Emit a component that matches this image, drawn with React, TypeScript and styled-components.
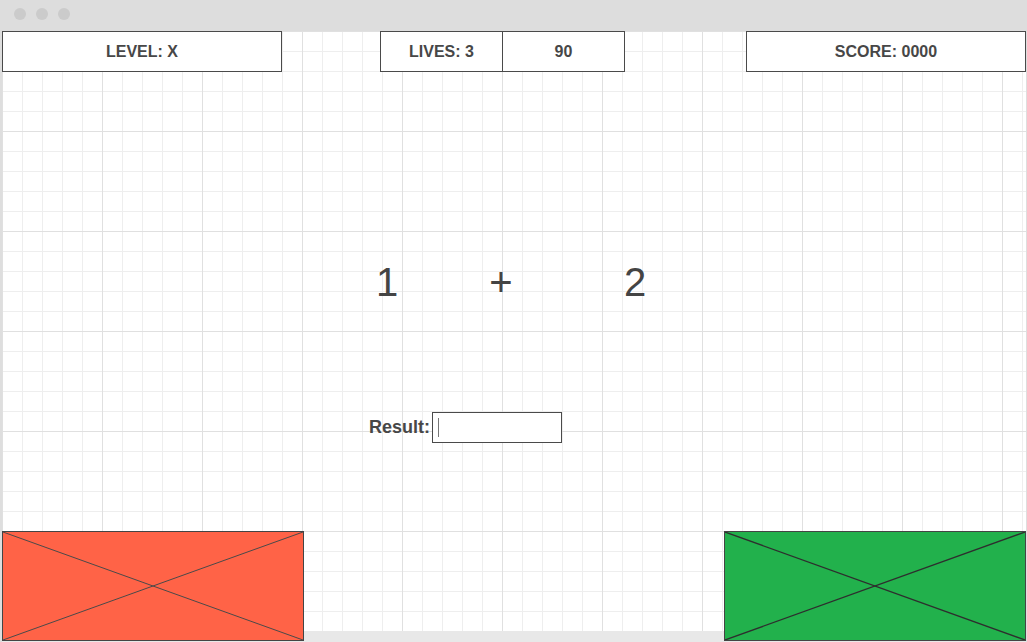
import React from "react";
import styled, { createGlobalStyle } from "styled-components";

const Global = createGlobalStyle`
  html, body { margin: 0; padding: 0; background: #ffffff; overflow: hidden; }
  body { font-family: "Liberation Sans", Arial, sans-serif; color: #444444; }
  * { box-sizing: border-box; }
`;

const Window = styled.div`
  width: 1027px;
  height: 642px;
  display: flex;
  flex-direction: column;
`;

const TitleBar = styled.div`
  height: 31px;
  flex: none;
  background: #dddddd;
  display: flex;
  align-items: flex-start;
  gap: 10px;
  padding: 8px 0 0 14px;
`;

const Dot = styled.span`
  width: 12px;
  height: 12px;
  border-radius: 50%;
  background: #cbcbcb;
`;

const Canvas = styled.div`
  flex: 1;
  display: flex;
  flex-direction: column;
  border-left: 2px solid #dedede;
  border-right: 1px solid #dedede;
  padding-bottom: 1px;
  background:
    linear-gradient(#e8e8e8, #e8e8e8) left bottom / 100% 11px no-repeat,
    linear-gradient(to right, #e0e0e0 1px, transparent 1px) 0 0 / 100px 100px,
    linear-gradient(to bottom, #e0e0e0 1px, transparent 1px) 0 0 / 100px 100px,
    linear-gradient(to right, #eeeeee 1px, transparent 1px) 0 0 / 20px 20px,
    linear-gradient(to bottom, #eeeeee 1px, transparent 1px) 0 0 / 20px 20px,
    #ffffff;
`;

const TopRow = styled.div`
  display: flex;
  height: 41px;
  flex: none;
`;

const StatGroup = styled.div<{ $ml?: string }>`
  display: flex;
  margin-left: ${(p) => p.$ml ?? "0"};
`;

const StatBox = styled.div<{ $w: number; $joined?: boolean }>`
  width: ${(p) => p.$w}px;
  height: 41px;
  border: 1px solid #4a4a4a;
  ${(p) => (p.$joined ? "margin-left: -1px;" : "")}
  background: #ffffff;
  display: flex;
  align-items: center;
  justify-content: center;
  font-weight: 700;
  font-size: 16px;
  color: #474747;
`;

const Equation = styled.div`
  display: flex;
  height: 40px;
  margin-top: 190px;
  padding-left: 365px;
  flex: none;
`;

const Term = styled.span<{ $gap?: number }>`
  width: 40px;
  margin-left: ${(p) => p.$gap ?? 0}px;
  text-align: center;
  font-size: 40px;
  line-height: 40px;
  color: #444444;
`;

const ResultRow = styled.div`
  display: flex;
  align-items: center;
  height: 31px;
  margin-top: 110px;
  padding-left: 367px;
  gap: 2px;
  flex: none;
`;

const ResultLabel = styled.label`
  font-weight: 700;
  font-size: 18px;
  line-height: 20px;
  margin-top: -2px;
  color: #474747;
`;

const ResultInput = styled.div`
  width: 130px;
  height: 31px;
  border: 1px solid #4a4a4a;
  background: #ffffff;
  display: flex;
  align-items: center;
  padding-left: 5px;
`;

const Caret = styled.span`
  width: 1px;
  height: 19px;
  background: #777777;
`;

const BottomRow = styled.div`
  display: flex;
  justify-content: space-between;
  margin-top: 88px;
  flex: none;
`;

const Placeholder = styled.div<{ $color: string }>`
  width: 302px;
  height: 110px;
  border: 1px solid #444444;
  background: ${(p) => p.$color};
`;

const Cross = styled.svg`
  display: block;
  width: 100%;
  height: 100%;
`;

function XBox({ color, stroke, width }: { color: string; stroke: string; width: number }) {
  return (
    <Placeholder $color={color}>
      <Cross viewBox="0 0 300 108" preserveAspectRatio="none">
        <line x1="0" y1="0" x2="300" y2="108" stroke={stroke} strokeWidth={width} vectorEffect="non-scaling-stroke" />
        <line x1="300" y1="0" x2="0" y2="108" stroke={stroke} strokeWidth={width} vectorEffect="non-scaling-stroke" />
      </Cross>
    </Placeholder>
  );
}

export default function App() {
  return (
    <>
      <Global />
      <Window>
        <TitleBar>
          <Dot />
          <Dot />
          <Dot />
        </TitleBar>
        <Canvas>
          <TopRow>
            <StatBox $w={280}>LEVEL: X</StatBox>
            <StatGroup $ml="98px">
              <StatBox $w={123}>LIVES: 3</StatBox>
              <StatBox $w={123} $joined>90</StatBox>
            </StatGroup>
            <StatGroup $ml="auto">
              <StatBox $w={280}>SCORE: 0000</StatBox>
            </StatGroup>
          </TopRow>
          <Equation>
            <Term>1</Term>
            <Term $gap={74}>+</Term>
            <Term $gap={94}>2</Term>
          </Equation>
          <ResultRow>
            <ResultLabel>Result:</ResultLabel>
            <ResultInput>
              <Caret />
            </ResultInput>
          </ResultRow>
          <BottomRow>
            <XBox color="#ff6347" stroke="#4a4a4a" width={1} />
            <XBox color="#22b14c" stroke="#2e2e2e" width={1.3} />
          </BottomRow>
        </Canvas>
      </Window>
    </>
  );
}
